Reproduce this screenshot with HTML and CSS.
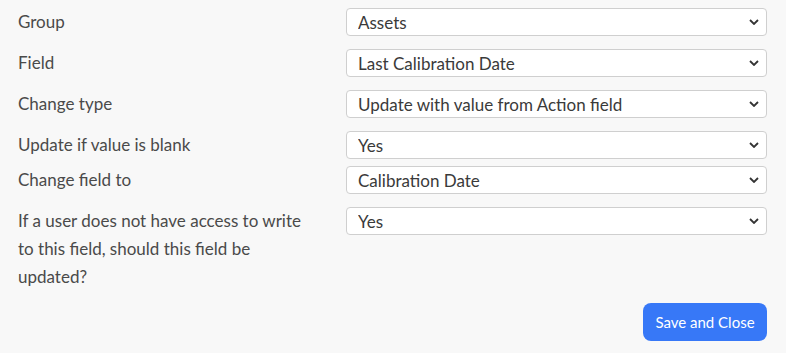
FILE: index.html
```html
<!DOCTYPE html>
<html lang="en">
<head>
  <meta charset="UTF-8" />
  <meta name="viewport" content="width=device-width, initial-scale=1" />
  <title>Field update</title>
  <link rel="stylesheet" href="styles.css">
</head>
<body>

  <form class="update-form">
    <div class="row">
      <label class="label" for="group">Group</label>
      <div class="select-wrap">
        <select id="group"><option>Assets</option></select>
        <svg class="chevron" viewBox="0 0 10 6"><path d="M1 1l4 4 4-4" /></svg>
      </div>
    </div>

    <div class="row">
      <label class="label" for="field">Field</label>
      <div class="select-wrap">
        <select id="field"><option>Last Calibration Date</option></select>
        <svg class="chevron" viewBox="0 0 10 6"><path d="M1 1l4 4 4-4" /></svg>
      </div>
    </div>

    <div class="row">
      <label class="label" for="change-type">Change type</label>
      <div class="select-wrap">
        <select id="change-type"><option>Update with value from Action field</option></select>
        <svg class="chevron" viewBox="0 0 10 6"><path d="M1 1l4 4 4-4" /></svg>
      </div>
    </div>

    <div class="row tight">
      <label class="label" for="blank">Update if value is blank</label>
      <div class="select-wrap">
        <select id="blank"><option>Yes</option></select>
        <svg class="chevron" viewBox="0 0 10 6"><path d="M1 1l4 4 4-4" /></svg>
      </div>
    </div>

    <div class="row">
      <label class="label" for="change-to">Change field to</label>
      <div class="select-wrap">
        <select id="change-to"><option>Calibration Date</option></select>
        <svg class="chevron" viewBox="0 0 10 6"><path d="M1 1l4 4 4-4" /></svg>
      </div>
    </div>

    <div class="row">
      <label class="label" for="access">If a user does not have access to write to this field, should this field be updated?</label>
      <div class="select-wrap">
        <select id="access"><option>Yes</option></select>
        <svg class="chevron" viewBox="0 0 10 6"><path d="M1 1l4 4 4-4" /></svg>
      </div>
    </div>

    <div class="actions">
      <button type="button" class="save-btn">Save and Close</button>
    </div>
  </form>

</body>
</html>
```

FILE: styles.css
```css
* {
  box-sizing: border-box;
  margin: 0;
  padding: 0;
  font-family: Lato, "Open Sans", sans-serif;
}

body {
  background: #f8f8f8;
  color: #444;
}

.update-form {
  padding: 8px 19px 0 18px;
}

.row {
  display: grid;
  grid-template-columns: 328px 1fr;
  align-items: start;
  margin-bottom: 13px;
}

.row.tight {
  margin-bottom: 7px;
}

.label {
  font-size: 17px;
  line-height: 28px;
  color: #4a4a4a;
  padding-right: 30px;
}

.select-wrap {
  position: relative;
}

.select-wrap select {
  display: block;
  width: 100%;
  height: 28px;
  appearance: none;
  -webkit-appearance: none;
  background: #fff;
  border: 1px solid #cfcfcf;
  border-radius: 4px;
  padding: 0 30px 0 11px;
  font-size: 17px;
  color: #3a3a3a;
}

.chevron {
  position: absolute;
  right: 8px;
  top: 11px;
  width: 10px;
  height: 6px;
  fill: none;
  stroke: #333;
  stroke-width: 1.8;
  pointer-events: none;
}

.actions {
  display: flex;
  justify-content: flex-end;
  margin-top: -1px;
}

.save-btn {
  width: 124px;
  height: 38px;
  border: none;
  border-radius: 8px;
  background: #3778f7;
  color: #fff;
  font-size: 15px;
  cursor: pointer;
}
```
